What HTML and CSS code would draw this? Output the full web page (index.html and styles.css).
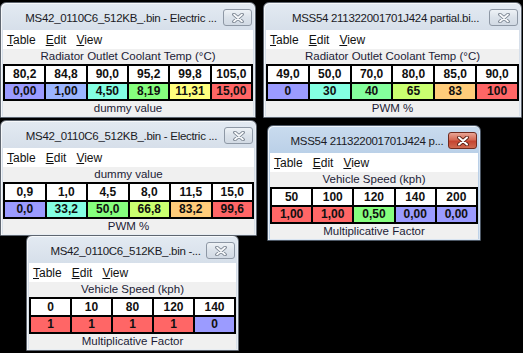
FILE: index.html
```html
<!DOCTYPE html>
<html lang="en">
<head>
    <meta charset="UTF-8">
    <title>Table windows</title>
    <link rel="stylesheet" href="styles.css">
</head>
<body>
    <div class="desktop">

        <!-- top left -->
        <div class="win win-1">
            <div class="titlebar">
                <span class="title">MS42_0110C6_512KB_.bin - Electric ...</span>
                <span class="close"><svg width="14" height="10" viewBox="0 0 14 10"><path d="M3 1.5 L11 8.5 M11 1.5 L3 8.5" stroke="#737d8a" stroke-width="3.6" stroke-linecap="round"/><path d="M3 1.5 L11 8.5 M11 1.5 L3 8.5" stroke="#f7f9fb" stroke-width="1.8" stroke-linecap="round"/></svg></span>
            </div>
            <div class="client">
                <div class="menubar"><span><u>T</u>able</span><span><u>E</u>dit</span><span><u>V</u>iew</span></div>
                <div class="axis">Radiator Outlet Coolant Temp (°C)</div>
                <table class="grid">
                    <tr><td>80,2</td><td>84,8</td><td>90,0</td><td>95,2</td><td>99,8</td><td>105,0</td></tr>
                    <tr><td class="c-blue">0,00</td><td class="c-sky">1,00</td><td class="c-aqua">4,50</td><td class="c-green">8,19</td><td class="c-yellow">11,31</td><td class="c-red">15,00</td></tr>
                </table>
                <div class="axis">dummy value</div>
            </div>
        </div>

        <!-- top right -->
        <div class="win win-2">
            <div class="titlebar">
                <span class="title">MSS54 211322001701J424 partial.bi...</span>
                <span class="close"><svg width="14" height="10" viewBox="0 0 14 10"><path d="M3 1.5 L11 8.5 M11 1.5 L3 8.5" stroke="#737d8a" stroke-width="3.6" stroke-linecap="round"/><path d="M3 1.5 L11 8.5 M11 1.5 L3 8.5" stroke="#f7f9fb" stroke-width="1.8" stroke-linecap="round"/></svg></span>
            </div>
            <div class="client">
                <div class="menubar"><span><u>T</u>able</span><span><u>E</u>dit</span><span><u>V</u>iew</span></div>
                <div class="axis">Radiator Outlet Coolant Temp (°C)</div>
                <table class="grid">
                    <tr><td>49,0</td><td>50,0</td><td>70,0</td><td>80,0</td><td>85,0</td><td>90,0</td></tr>
                    <tr><td class="c-blue">0</td><td class="c-aqua">30</td><td class="c-mint">40</td><td class="c-lime">65</td><td class="c-orange">83</td><td class="c-red">100</td></tr>
                </table>
                <div class="axis">PWM %</div>
            </div>
        </div>

        <!-- middle left -->
        <div class="win win-3">
            <div class="titlebar">
                <span class="title">MS42_0110C6_512KB_.bin - Electric ...</span>
                <span class="close"><svg width="14" height="10" viewBox="0 0 14 10"><path d="M3 1.5 L11 8.5 M11 1.5 L3 8.5" stroke="#737d8a" stroke-width="3.6" stroke-linecap="round"/><path d="M3 1.5 L11 8.5 M11 1.5 L3 8.5" stroke="#f7f9fb" stroke-width="1.8" stroke-linecap="round"/></svg></span>
            </div>
            <div class="client">
                <div class="menubar"><span><u>T</u>able</span><span><u>E</u>dit</span><span><u>V</u>iew</span></div>
                <div class="axis">dummy value</div>
                <table class="grid">
                    <tr><td>0,9</td><td>1,0</td><td>4,5</td><td>8,0</td><td>11,5</td><td>15,0</td></tr>
                    <tr><td class="c-blue">0,0</td><td class="c-aqua">33,2</td><td class="c-green">50,0</td><td class="c-lime">66,8</td><td class="c-orange">83,2</td><td class="c-red">99,6</td></tr>
                </table>
                <div class="axis">PWM %</div>
            </div>
        </div>

        <!-- middle right, active -->
        <div class="win win-4 active">
            <div class="titlebar">
                <span class="title">MSS54 211322001701J424 p...</span>
                <span class="close"><svg width="14" height="10" viewBox="0 0 14 10"><path d="M3 1.5 L11 8.5 M11 1.5 L3 8.5" stroke="#5e2418" stroke-width="3.8" stroke-linecap="round"/><path d="M3 1.5 L11 8.5 M11 1.5 L3 8.5" stroke="#ffffff" stroke-width="2" stroke-linecap="round"/></svg></span>
            </div>
            <div class="client">
                <div class="menubar"><span><u>T</u>able</span><span><u>E</u>dit</span><span><u>V</u>iew</span></div>
                <div class="axis">Vehicle Speed (kph)</div>
                <table class="grid">
                    <tr><td>50</td><td>100</td><td>120</td><td>140</td><td>200</td></tr>
                    <tr><td class="c-red">1,00</td><td class="c-red">1,00</td><td class="c-green">0,50</td><td class="c-blue">0,00</td><td class="c-blue">0,00</td></tr>
                </table>
                <div class="axis">Multiplicative Factor</div>
            </div>
        </div>

        <!-- bottom -->
        <div class="win win-5">
            <div class="titlebar">
                <span class="title">MS42_0110C6_512KB_.bin -...</span>
                <span class="close"><svg width="14" height="10" viewBox="0 0 14 10"><path d="M3 1.5 L11 8.5 M11 1.5 L3 8.5" stroke="#737d8a" stroke-width="3.6" stroke-linecap="round"/><path d="M3 1.5 L11 8.5 M11 1.5 L3 8.5" stroke="#f7f9fb" stroke-width="1.8" stroke-linecap="round"/></svg></span>
            </div>
            <div class="client">
                <div class="menubar"><span><u>T</u>able</span><span><u>E</u>dit</span><span><u>V</u>iew</span></div>
                <div class="axis">Vehicle Speed (kph)</div>
                <table class="grid">
                    <tr><td>0</td><td>10</td><td>80</td><td>120</td><td>140</td></tr>
                    <tr><td class="c-red">1</td><td class="c-red">1</td><td class="c-red">1</td><td class="c-red">1</td><td class="c-blue">0</td></tr>
                </table>
                <div class="axis">Multiplicative Factor</div>
            </div>
        </div>

    </div>
</body>
</html>
```

FILE: styles.css
```css
html, body {
    margin: 0;
    padding: 0;
    background: #000;
}
body {
    font-family: "Liberation Sans", Arial, sans-serif;
    font-size: 11.5px;
    color: #1b1b2e;
}
.desktop {
    position: relative;
    width: 523px;
    height: 353px;
    overflow: hidden;
}

/* windows sit freely on the desktop */
.win {
    position: absolute;
    display: flex;
    flex-direction: column;
    box-sizing: border-box;
    padding: 0 2px 1px;
    border: 1px solid #5f6670;
    border-radius: 6px 6px 0 0;
    background: linear-gradient(#e3eaf2, #d5dee9 30px, #d9e1ea);
    box-shadow: inset 1px 1px 0 rgba(255, 255, 255, 0.7), inset -1px -1px 0 rgba(255, 255, 255, 0.4);
}
.win.active {
    background: linear-gradient(#c9dbee, #b9cfe7 30px, #bed2e8);
    border-color: #4d5866;
}
.win-1 { left: 0;     top: 2px;   width: 256px; }
.win-2 { left: 263px; top: 2px;   width: 259px; }
.win-3 { left: 0;     top: 120px; width: 257px; }
.win-4 { left: 267px; top: 125px; width: 214px; }
.win-5 { left: 26px;  top: 235px; width: 213px; }

.titlebar {
    height: 27px;
    display: flex;
    align-items: flex-start;
}
.title {
    flex: 1;
    text-align: center;
    font-size: 11.5px;
    letter-spacing: -0.3px;
    line-height: 14px;
    padding: 8px 0 0 16px;
    white-space: nowrap;
    overflow: hidden;
    color: #1a1a24;
}
.close {
    width: 27px;
    height: 15px;
    margin-top: 6px;
    margin-right: 1px;
    display: flex;
    align-items: center;
    justify-content: center;
    border: 1px solid #8e98a5;
    border-radius: 3px;
    background: linear-gradient(#eef2f6, #dbe2ea 50%, #d2dae4);
}
.active .close {
    border-color: #6f2a1e;
    background: linear-gradient(#e9a595, #d56a55 45%, #c54430 55%, #cf6a50);
}

.client {
    background: #f0f0f0;
    display: flex;
    flex-direction: column;
}
.menubar {
    height: 19px;
    background: #fff;
    display: flex;
    align-items: center;
    gap: 10px;
    padding-left: 4px;
    font-size: 12px;
    color: #111;
}
.axis {
    height: 15px;
    line-height: 15px;
    text-align: center;
    color: #1c1c36;
}

.grid {
    width: 100%;
    border-collapse: collapse;
    table-layout: fixed;
}
.grid td {
    border: 2px solid #000;
    height: 16px;
    padding: 0;
    text-align: center;
    font-size: 12px;
    font-weight: bold;
    line-height: 16px;
    background: #fff;
    color: #101010;
}
.grid tr + tr td {
    height: 15px;
    line-height: 15px;
}
.grid td.c-blue   { background: #9b9bff; }
.grid td.c-sky    { background: #9bb5ff; }
.grid td.c-aqua   { background: #84ffe2; }
.grid td.c-mint   { background: #84ff9c; }
.grid td.c-green  { background: #86ff7e; }
.grid td.c-lime   { background: #caff70; }
.grid td.c-yellow { background: #ffff7e; }
.grid td.c-orange { background: #ffcc7a; }
.grid td.c-red    { background: #ff6666; }
```
